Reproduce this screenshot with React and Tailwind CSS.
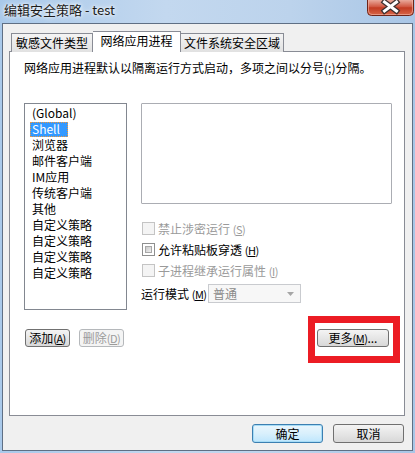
import React from 'react'

const font = "font-['Noto_Sans_CJK_SC',sans-serif]"

const listItems = [
  '(Global)',
  'Shell',
  '浏览器',
  '邮件客户端',
  'IM应用',
  '传统客户端',
  '其他',
  '自定义策略',
  '自定义策略',
  '自定义策略',
  '自定义策略',
]

const Hotkey = ({ k }) => (
  <span className="text-[11px] tracking-[-0.5px]">
    (<span className="underline">{k}</span>)
  </span>
)

const CheckRow = ({ label, k, enabled }) => (
  <div className="flex items-center h-[21px] gap-[3px]">
    <span
      className={
        enabled
          ? 'w-[13px] h-[13px] border border-[#8e8f8f] bg-white p-[2px] ml-[1px]'
          : 'w-[13px] h-[13px] border border-[#c4c4c4] bg-[#f4f4f4] ml-[1px]'
      }
    >
      {enabled && <span className="block w-full h-full border border-[#a8a8a8] bg-[linear-gradient(135deg,#c9c9c9,#f0f0f0)]" />}
    </span>
    <span className={enabled ? 'text-black' : 'text-[#9a9a9a]'}>
      {label} <Hotkey k={k} />
    </span>
  </div>
)

const CloseButton = () => (
  <svg width="47" height="16" viewBox="0 0 47 16">
    <defs>
      <linearGradient id="cg" x1="0" y1="0" x2="0" y2="1">
        <stop offset="0" stopColor="#e9a99b" />
        <stop offset="0.45" stopColor="#d0553f" />
        <stop offset="0.5" stopColor="#c23b22" />
        <stop offset="1" stopColor="#d8684a" />
      </linearGradient>
    </defs>
    <path d="M0.5 0 V11.5 Q0.5 15.5 4.5 15.5 H42.5 Q46.5 15.5 46.5 11.5 V0" fill="url(#cg)" stroke="#6e2418" />
    <path d="M1.5 0 V11 Q1.5 14.5 5 14.5 H42 Q45.5 14.5 45.5 11 V0" fill="none" stroke="#f3b9ab" strokeOpacity="0.6" />
    <g strokeLinecap="square">
      <path d="M17.5 2 L29.5 11 M29.5 2 L17.5 11" stroke="#3d3030" strokeWidth="5.5" />
      <path d="M17.5 2 L29.5 11 M29.5 2 L17.5 11" stroke="#ffffff" strokeWidth="3" />
    </g>
  </svg>
)

const Button = ({ children, className }) => (
  <div
    className={`h-[18px] flex items-center justify-center rounded-[3px] border ${className}`}
  >
    {children}
  </div>
)

export default function App() {
  return (
    <div
      className={`w-[415px] h-[453px] overflow-hidden px-[2px] pb-[2px] text-[12px] leading-[16px] ${font} bg-[linear-gradient(90deg,#a9c9ea,#c3d8ef_40%,#bcd3ec_70%,#a9c6e6)]`}
    >
      {/* title bar */}
      <div className="h-[23px] flex items-start justify-between">
        <div className="pl-[2px] pt-[2px] text-[13px] leading-[16px] text-[#1b1b1b] [text-shadow:0_0_6px_#ffffff,0_0_3px_#ffffff]">
          编辑安全策略 - test
        </div>
        <div className="mr-[-1px]">
          <CloseButton />
        </div>
      </div>

      {/* client area */}
      <div className="h-[428px] border border-[#5f6f84] bg-[#f0f0f0] pt-[7px] pl-[6px]">
        {/* tabs */}
        <div className="flex items-end h-[21px] ml-[2px]">
          <div className="w-[82px] h-[19px] border border-b-0 border-[#898c95] bg-[linear-gradient(#f4f4f4,#e1e1e1)] flex items-center justify-center">
            敏感文件类型
          </div>
          <div className="relative z-10 w-[88px] h-[21px] border border-b-0 border-l-0 border-[#898c95] bg-white flex items-center justify-center pb-[2px]">
            网络应用进程
          </div>
          <div className="w-[103px] h-[19px] border border-b-0 border-l-0 border-[#898c95] bg-[linear-gradient(#f4f4f4,#e1e1e1)] flex items-center justify-center">
            文件系统安全区域
          </div>
        </div>

        {/* panel */}
        <div className="-mt-[1px] w-[396px] h-[365px] border border-[#898c95] bg-white pl-[14px] pt-[8px]">
          <div>网络应用进程默认以隔离运行方式启动，多项之间以分号(;)分隔。</div>

          <div className="flex mt-[27px] gap-[14px]">
            {/* list */}
            <div className="w-[103px] h-[207px] border border-[#828790] pl-[5px] pt-[1px]">
              {listItems.map((item, i) => (
                <div key={i} className="h-[16px] flex items-center">
                  {i === 1 ? (
                    <span className="h-[15px] flex items-center pl-[2px] pr-[8px] bg-[#3399ff] text-white outline outline-1 outline-dotted outline-[#f29a3c] -outline-offset-1">
                      {item}
                    </span>
                  ) : (
                    <span className="px-[2px]">{item}</span>
                  )}
                </div>
              ))}
            </div>

            {/* right column */}
            <div className="flex flex-col">
              <div className="w-[251px] h-[101px] border border-[#abadb3] rounded-[1px]" />
              <div className="mt-[14px]">
                <CheckRow label="禁止涉密运行" k="S" />
                <CheckRow label="允许粘贴板穿透" k="H" enabled />
                <CheckRow label="子进程继承运行属性" k="I" />
              </div>
              <div className="flex items-center h-[23px] mt-[1px]">
                <span className="w-[67px]">
                  运行模式 <Hotkey k="M" />
                </span>
                <div className="w-[93px] h-[19px] border border-[#c9cbcf] bg-[#f7f7f7] flex items-center justify-between pl-[4px] pr-[6px] text-[#8a8a8a]">
                  <span>普通</span>
                  <svg width="7" height="4" viewBox="0 0 7 4">
                    <path d="M0 0 H7 L3.5 4 Z" fill="#a6a6a6" />
                  </svg>
                </div>
              </div>
            </div>
          </div>

          {/* buttons in panel */}
          <div className="flex items-center mt-[19px] ml-[1px] w-[364px]">
            <Button className="w-[45px] border-[#707070] bg-[linear-gradient(#f4f4f4,#e6e6e6_50%,#d8d8d8)]">
              添加<Hotkey k="A" />
            </Button>
            <Button className="ml-[9px] w-[45px] border-[#b5b8bb] bg-[#f4f4f4] text-[#9b9b9b]">
              删除<Hotkey k="D" />
            </Button>
            <div className="relative ml-auto">
              <Button className="w-[72px] border-[#707070] bg-[linear-gradient(#f4f4f4,#e6e6e6_50%,#d8d8d8)]">
                更多 <Hotkey k="M" />...
              </Button>
              <div className="absolute left-[-9px] top-[-13px] w-[92px] h-[47px] border-[7px] border-[#ec1c24]" />
            </div>
          </div>
        </div>

        {/* dialog buttons */}
        <div className="flex justify-end gap-[10px] w-[396px] mt-[8px] pr-[1px]">
          <Button className="w-[71px] h-[19px] border-[#3c7fb1] bg-[linear-gradient(#eaf6fd,#d9f0fc_50%,#bee6fd)] shadow-[inset_0_0_0_1px_#a6dcf6]">
            确定
          </Button>
          <Button className="w-[71px] h-[19px] border-[#707070] bg-[linear-gradient(#f4f4f4,#e6e6e6_50%,#d8d8d8)]">
            取消
          </Button>
        </div>
      </div>
    </div>
  )
}
